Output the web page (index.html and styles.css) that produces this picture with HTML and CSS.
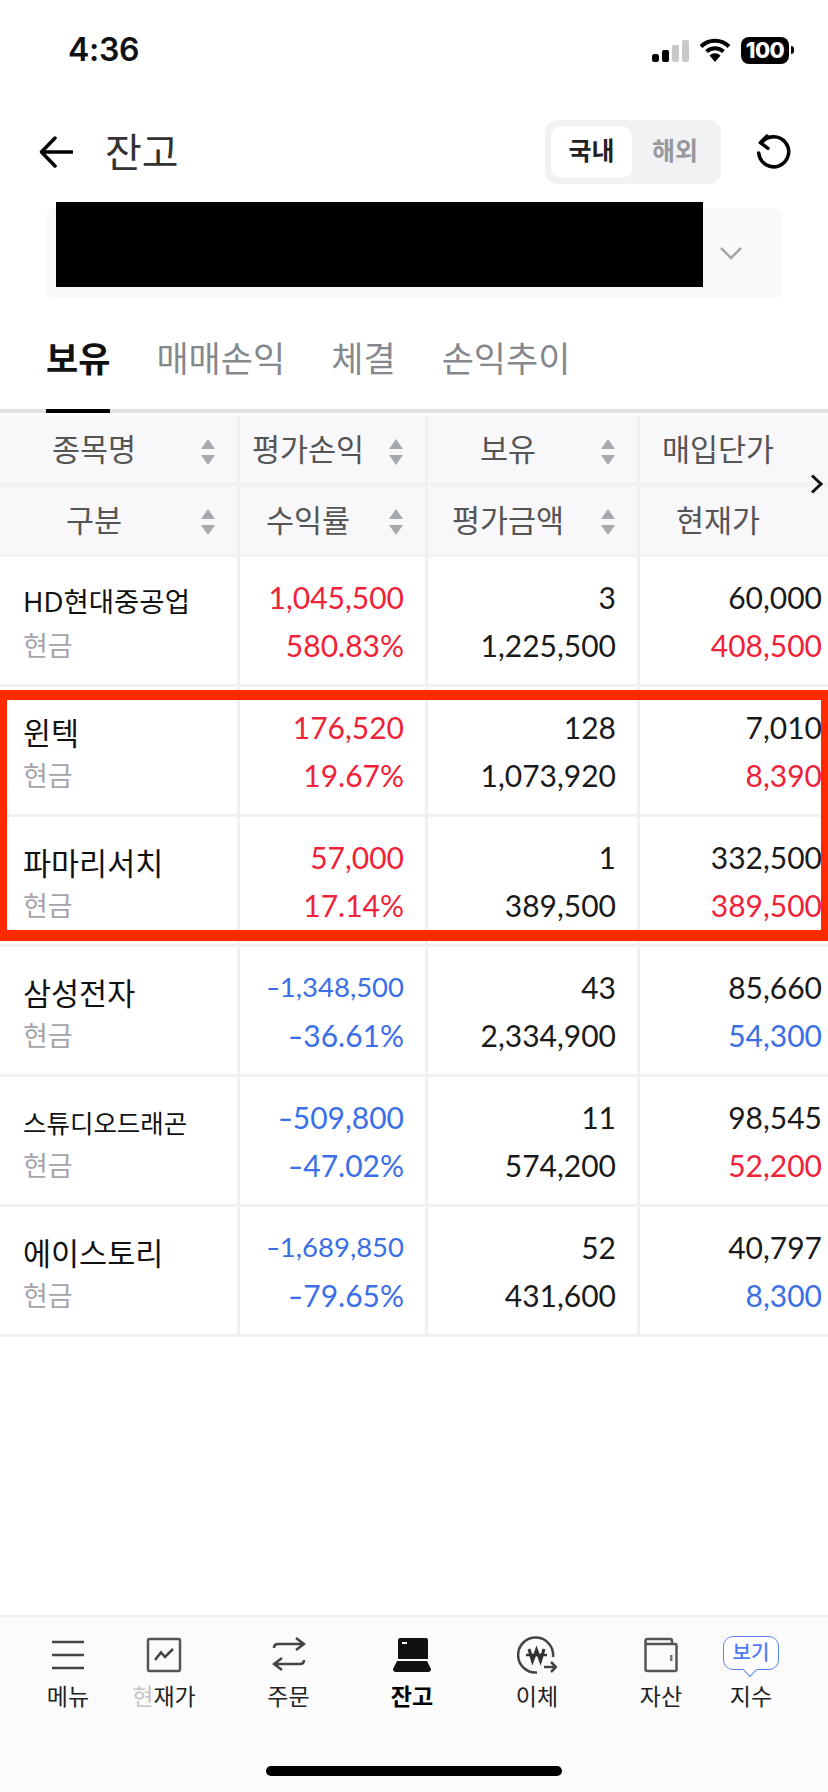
FILE: index.html
```html
<!DOCTYPE html>
<html lang="ko">
<head>
    <meta charset="UTF-8">
    <meta name="viewport" content="width=device-width, initial-scale=1.0">
    <title>잔고</title>
    <link rel="stylesheet" href="styles.css">
</head>
<body>

    <svg class="defs" width="0" height="0">
        <symbol id="sort" viewBox="0 0 14 28">
            <path d="M7 1 L14 11 L0 11 Z" fill="#a6a9ae"/>
            <path d="M7 27 L14 17 L0 17 Z" fill="#a6a9ae"/>
        </symbol>
    </svg>

    <div class="page">
        <div class="status-bar">
            <span class="time">4:36</span>
            <div class="status-icons">
                <svg width="37" height="23" viewBox="0 0 37 23">
                    <rect x="0" y="15" width="7" height="8" rx="2.500" fill="#000"/>
                    <rect x="10" y="11" width="7" height="12" rx="2" fill="#000"/>
                    <rect x="20" y="6" width="7" height="17" rx="2" fill="#c8c8c8"/>
                    <rect x="30" y="1" width="7" height="22" rx="2" fill="#c8c8c8"/>
                </svg>
                <svg width="32" height="24" viewBox="0 0 32 24">
                    <path d="M2 8.500 A20 20 0 0 1 30 8.500" fill="none" stroke="#000" stroke-width="4"/>
                    <path d="M7.500 13.500 A12.500 12.500 0 0 1 24.500 13.500" fill="none" stroke="#000" stroke-width="4"/>
                    <path d="M16 24 L10.500 17.500 A8 8 0 0 1 21.500 17.500 Z" fill="#000"/>
                </svg>
                <div class="battery">100</div>
                <div class="battery-tip"></div>
            </div>
        </div>

        <div class="top-bar">
            <svg class="back" width="34" height="34" viewBox="0 0 34 34">
                <path d="M33 17 H3 M16 3 L2.500 17 L16 31" fill="none" stroke="#000" stroke-width="3.500" stroke-linecap="round" stroke-linejoin="round"/>
            </svg>
            <h1 class="title">잔고</h1>
            <div class="segment">
                <span class="segment-on">국내</span>
                <span class="segment-off">해외</span>
            </div>
            <svg class="refresh" width="34" height="36" viewBox="0 0 34 36">
                <path d="M10 2 L3.300 8.700 L11 14.300 M4.500 9 A15 15 0 1 1 1.700 19" fill="none" stroke="#000" stroke-width="3.500" stroke-linecap="round" stroke-linejoin="round"/>
            </svg>
        </div>

        <div class="account">
            <div class="account-mask"></div>
            <svg class="account-arrow" width="24" height="14" viewBox="0 0 24 14">
                <path d="M2 2 L12 12 L22 2" fill="none" stroke="#a4a6ab" stroke-width="2.500"/>
            </svg>
        </div>

        <div class="tabs">
            <span class="tab tab-on">보유</span>
            <span class="tab">매매손익</span>
            <span class="tab">체결</span>
            <span class="tab">손익추이</span>
        </div>

        <div class="table">
            <div class="table-head">
                <div class="head-row">
                    <div class="head-cell"><span>종목명</span><svg class="sort"><use href="#sort"/></svg></div>
                    <div class="head-cell"><span>평가손익</span><svg class="sort"><use href="#sort"/></svg></div>
                    <div class="head-cell"><span>보유</span><svg class="sort"><use href="#sort"/></svg></div>
                    <div class="head-cell head-last"><span>매입단가</span></div>
                </div>
                <div class="head-row">
                    <div class="head-cell"><span>구분</span><svg class="sort"><use href="#sort"/></svg></div>
                    <div class="head-cell"><span>수익률</span><svg class="sort"><use href="#sort"/></svg></div>
                    <div class="head-cell"><span>평가금액</span><svg class="sort"><use href="#sort"/></svg></div>
                    <div class="head-cell head-last"><span>현재가</span></div>
                </div>
                <svg class="more" width="14" height="20" viewBox="0 0 14 20">
                    <path d="M2 1.500 L11 10 L2 18.500" fill="none" stroke="#111" stroke-width="3"/>
                </svg>
            </div>

            <div class="row">
                <div class="cell name-cell"><div class="name name-mid">HD현대중공업</div><div class="sub">현금</div></div>
                <div class="cell"><div class="up">1,045,500</div><div class="up">580.83%</div></div>
                <div class="cell"><div>3</div><div>1,225,500</div></div>
                <div class="cell"><div>60,000</div><div class="up">408,500</div></div>
            </div>
            <div class="row">
                <div class="cell name-cell"><div class="name">윈텍</div><div class="sub">현금</div></div>
                <div class="cell"><div class="up">176,520</div><div class="up">19.67%</div></div>
                <div class="cell"><div>128</div><div>1,073,920</div></div>
                <div class="cell"><div>7,010</div><div class="up">8,390</div></div>
            </div>
            <div class="row">
                <div class="cell name-cell"><div class="name">파마리서치</div><div class="sub">현금</div></div>
                <div class="cell"><div class="up">57,000</div><div class="up">17.14%</div></div>
                <div class="cell"><div>1</div><div>389,500</div></div>
                <div class="cell"><div>332,500</div><div class="up">389,500</div></div>
            </div>
            <div class="row">
                <div class="cell name-cell"><div class="name">삼성전자</div><div class="sub">현금</div></div>
                <div class="cell"><div class="down small"><span class="minus">-</span>1,348,500</div><div class="down"><span class="minus">-</span>36.61%</div></div>
                <div class="cell"><div>43</div><div>2,334,900</div></div>
                <div class="cell"><div>85,660</div><div class="down">54,300</div></div>
            </div>
            <div class="row">
                <div class="cell name-cell"><div class="name name-small">스튜디오드래곤</div><div class="sub">현금</div></div>
                <div class="cell"><div class="down"><span class="minus">-</span>509,800</div><div class="down"><span class="minus">-</span>47.02%</div></div>
                <div class="cell"><div>11</div><div>574,200</div></div>
                <div class="cell"><div>98,545</div><div class="up">52,200</div></div>
            </div>
            <div class="row">
                <div class="cell name-cell"><div class="name">에이스토리</div><div class="sub">현금</div></div>
                <div class="cell"><div class="down small"><span class="minus">-</span>1,689,850</div><div class="down"><span class="minus">-</span>79.65%</div></div>
                <div class="cell"><div>52</div><div>431,600</div></div>
                <div class="cell"><div>40,797</div><div class="down">8,300</div></div>
            </div>

            <div class="highlight"></div>
        </div>

        <div class="bottom-nav">
            <div class="nav-items">
                <div class="nav-item">
                    <svg width="34" height="36" viewBox="0 0 34 36">
                        <path d="M1 5 H33 M1 18 H33 M1 31 H33" stroke="#444" stroke-width="2.500"/>
                    </svg>
                    <span class="nav-label">메뉴</span>
                </div>
                <div class="nav-item">
                    <svg width="36" height="36" viewBox="0 0 36 36">
                        <rect x="2" y="2" width="32" height="32" rx="1.500" fill="none" stroke="#555" stroke-width="2.500"/>
                        <path d="M9 23 L15 15.500 L19 20 L27 12" fill="none" stroke="#444" stroke-width="2.500"/>
                    </svg>
                    <span class="nav-label"><span class="nav-fade">현</span>재가</span>
                </div>
                <div class="nav-item">
                    <svg width="34" height="36" viewBox="0 0 34 36">
                        <path d="M2 11 Q2 7 6 7 H31 M24 1 L32 7 L24 13" fill="none" stroke="#444" stroke-width="2.500"/>
                        <path d="M32 23 Q32 27 28 27 H3 M10 21 L2 27 L10 33" fill="none" stroke="#444" stroke-width="2.500"/>
                    </svg>
                    <span class="nav-label">주문</span>
                </div>
                <div class="nav-item">
                    <svg width="38" height="36" viewBox="0 0 38 36">
                        <path d="M5 3 Q5 1 7 1 H33 Q35 1 35 3 V22 H5 Z" fill="#111"/>
                        <path d="M4 24 H34 L38 32 Q38 35 35 35 H3 Q0 35 0 32 Z" fill="#111"/>
                        <rect x="9" y="5" width="5" height="2" fill="#fff"/>
                    </svg>
                    <span class="nav-label nav-on">잔고</span>
                </div>
                <div class="nav-item">
                    <svg width="40" height="38" viewBox="0 0 40 38">
                        <path d="M36 21 A17.500 17.500 0 1 0 20 36.500" fill="none" stroke="#444" stroke-width="2.500"/>
                        <path d="M9 19 H30" fill="none" stroke="#333" stroke-width="2.500"/>
                        <path d="M12 13 L15.500 25 L19.500 14 L23.500 25 L27 13" fill="none" stroke="#333" stroke-width="3"/>
                        <path d="M27 31 H39 M34 26 L39 31 L34 36" fill="none" stroke="#444" stroke-width="2.500"/>
                    </svg>
                    <span class="nav-label">이체</span>
                </div>
                <div class="nav-item">
                    <svg width="34" height="36" viewBox="0 0 34 36">
                        <path d="M1.500 9 V4 Q1.500 2 3.500 2 H26 Q28 2 28 4 V7 M1.500 7 H31 Q32.500 7 32.500 9 V32 Q32.500 34 31 34 H3.500 Q1.500 34 1.500 32 Z" fill="none" stroke="#555" stroke-width="2.500"/>
                        <rect x="26" y="18" width="2.500" height="6" fill="#777"/>
                    </svg>
                    <span class="nav-label">자산</span>
                </div>
                <div class="nav-item">
                    <div class="bubble">보기</div>
                    <span class="nav-label">지수</span>
                </div>
            </div>
            <div class="home-bar"></div>
        </div>
    </div>

</body>
</html>
```

FILE: styles.css
```css
* {
    box-sizing: border-box;
}
body {
    margin: 0;
    background-color: #fff;
    font-family: "Noto Sans CJK KR", "Noto Sans", sans-serif;
    color: #111;
}
.defs {
    position: absolute;
}
.page {
    width: 828px;
    height: 1792px;
    display: flex;
    flex-direction: column;
    overflow: hidden;
}

/* status bar */
.status-bar {
    height: 100px;
    display: flex;
    justify-content: space-between;
    padding: 30px 34px 0 68px;
}
.time {
    font-family: "Inter", sans-serif;
    font-size: 32px;
    font-weight: 600;
    line-height: 40px;
    letter-spacing: -0.3px;
}
.status-icons {
    display: flex;
    align-items: center;
    height: 40px;
}
.status-icons svg {
    margin-right: 10px;
}
.battery {
    width: 48px;
    height: 27px;
    background-color: #000;
    color: #fff;
    border-radius: 8px;
    font-family: "Inter", sans-serif;
    font-size: 22px;
    font-weight: 800;
    line-height: 27px;
    text-align: center;
    letter-spacing: -0.5px;
}
.battery-tip {
    width: 3px;
    height: 8px;
    margin-left: 2px;
    background-color: #000;
    border-radius: 0 3px 3px 0;
}

/* top bar */
.top-bar {
    height: 64px;
    margin-top: 20px;
    display: flex;
    align-items: center;
    padding: 0 37px 0 39px;
}
.back {
    margin-right: 32px;
}
.title {
    flex-grow: 1;
    margin: 0 0 4px;
    font-size: 40px;
    font-weight: 400;
    color: #333;
    line-height: 60px;
}
.segment {
    width: 176px;
    height: 64px;
    display: flex;
    align-items: center;
    padding: 6px;
    background-color: #f1f2f4;
    border-radius: 12px;
    margin-right: 36px;
}
.segment span {
    height: 52px;
    font-size: 25px;
    font-weight: 700;
    line-height: 47px;
    text-align: center;
}
.segment-on {
    width: 81px;
    background-color: #fff;
    border-radius: 10px;
    color: #222;
}
.segment-off {
    flex-grow: 1;
    padding-left: 3px;
    color: #96989d;
}

/* account select */
.account {
    height: 90px;
    margin: 24px 46px 0;
    background-color: #f9f9fb;
    border-radius: 8px;
    position: relative;
    display: flex;
    justify-content: flex-end;
    align-items: center;
    padding-right: 39px;
}
.account-mask {
    position: absolute;
    left: 10px;
    top: -6px;
    width: 647px;
    height: 85px;
    background-color: #000;
}

/* tabs */
.tabs {
    height: 115px;
    display: flex;
    gap: 46px;
    padding-left: 46px;
    border-bottom: 4px solid #e2e2e2;
}
.tab {
    height: 115px;
    padding-top: 35px;
    font-size: 35px;
    line-height: 48px;
    color: #85888d;
}
.tab-on {
    font-weight: 700;
    color: #111;
    border-bottom: 4px solid #000;
}

/* table */
.table {
    position: relative;
    margin-top: 3px;
}
.table-head {
    position: relative;
}
.head-row {
    display: grid;
    grid-template-columns: 240px 188px 212px 188px;
    background-color: #f8f8fa;
}
.head-row:first-child {
    height: 70px;
    border-bottom: 3px solid #f1f1f3;
}
.head-row:nth-child(2) {
    height: 71px;
    border-bottom: 3px solid #f1f1f3;
}
.head-cell {
    display: flex;
    align-items: center;
    border-right: 3px solid #f0f0f2;
    font-size: 30.5px;
    color: #555;
}
.head-cell span {
    flex-grow: 1;
    padding-bottom: 3px;
    text-align: center;
}
.head-last {
    border-right: none;
    padding-right: 32px;
}
.sort {
    width: 14px;
    height: 28px;
    margin: 4px 22px 0 13px;
    flex-shrink: 0;
}
.more {
    position: absolute;
    right: 4px;
    top: 58px;
}
.row {
    height: 130px;
    display: grid;
    grid-template-columns: 240px 188px 212px 188px;
    border-bottom: 3px solid #f1f1f3;
}
.cell {
    padding: 16px 21px 0 0;
    border-right: 3px solid #f0f0f2;
    text-align: right;
    font-family: "Lato", sans-serif;
    font-size: 30px;
    line-height: 48px;
    color: #1a1a1a;
}
.cell:last-child {
    border-right: none;
    padding-right: 6px;
}
.name-cell {
    padding: 26px 0 0 23px;
    text-align: left;
    font-family: "Noto Sans CJK KR", sans-serif;
}
.name {
    font-size: 30.5px;
    line-height: 38px;
    color: #111;
    white-space: nowrap;
}
.name-mid {
    font-family: "Noto Sans", "Noto Sans CJK KR", sans-serif;
    font-size: 27.5px;
}
.name-small {
    font-size: 25.5px;
}
.sub {
    font-size: 27px;
    line-height: 48px;
    color: #a3a5ab;
}
.up {
    color: #ee2238;
}
.down {
    color: #3b6fe6;
}
.small {
    font-size: 27.5px;
}
.minus {
    display: inline-block;
    margin: 0 2px;
    transform: scaleX(1.4);
}
.highlight {
    position: absolute;
    left: 0;
    right: 0;
    top: 274px;
    height: 251px;
    border: solid #ff2a00;
    border-width: 10px 7px 11px 7px;
}

/* bottom nav */
.bottom-nav {
    margin-top: auto;
    height: 177px;
    background-color: #fbfbfb;
    border-top: 2px solid #eeeef3;
    position: relative;
}
.nav-items {
    display: grid;
    grid-template-columns: 96px 96px 153px 94px 156px 92px 88px;
    padding: 19px 0 0 20px;
}
.nav-item {
    display: flex;
    flex-direction: column;
    align-items: center;
}
.nav-item svg, .bubble {
    height: 38px;
}
.nav-label {
    margin-top: 5px;
    font-size: 23px;
    line-height: 32px;
    color: #222;
}
.nav-on {
    font-weight: 700;
    color: #000;
}
.nav-fade {
    color: #c4c4c6;
}
.bubble {
    width: 56px;
    height: 34px;
    margin-bottom: 4px;
    position: relative;
    border: 1.5px solid #5a86f5;
    border-radius: 10px;
    background-color: #fff;
    font-size: 20px;
    font-weight: 500;
    line-height: 29px;
    text-align: center;
    color: #4d7cf6;
}
.bubble::after {
    content: "";
    position: absolute;
    left: 21px;
    bottom: -6px;
    width: 9px;
    height: 9px;
    background-color: #fff;
    border-right: 1.5px solid #5a86f5;
    border-bottom: 1.5px solid #5a86f5;
    transform: rotate(45deg);
}
.home-bar {
    position: absolute;
    left: 266px;
    top: 149px;
    width: 296px;
    height: 10px;
    background-color: #000;
    border-radius: 5px;
}
```
